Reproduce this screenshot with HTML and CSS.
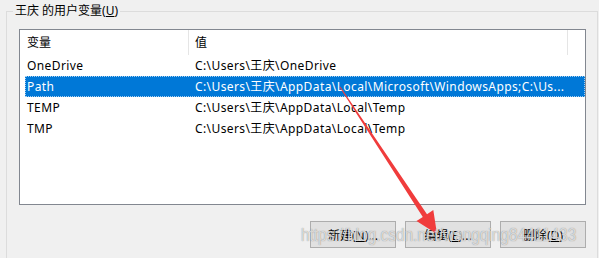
FILE: index.html
```html
<!DOCTYPE html>
<html lang="zh-CN">
<head>
    <meta charset="UTF-8">
    <meta name="viewport" content="width=device-width, initial-scale=1.0">
    <title>用户变量</title>
    <link rel="stylesheet" href="styles.css">
</head>
<body>
    <fieldset class="group">
        <legend class="group-title">王庆 的用户变量(<u>U</u>)</legend>
        <div class="list">
            <div class="list-header">
                <div class="col-head col-name">变量</div>
                <div class="col-head col-value">值</div>
            </div>
            <div class="row"><span>OneDrive</span><span>C:\Users\王庆\OneDrive</span></div>
            <div class="row selected"><span>Path</span><span>C:\Users\王庆\AppData\Local\Microsoft\WindowsApps;C:\Us...</span></div>
            <div class="row"><span>TEMP</span><span>C:\Users\王庆\AppData\Local\Temp</span></div>
            <div class="row"><span>TMP</span><span>C:\Users\王庆\AppData\Local\Temp</span></div>
        </div>
        <div class="buttons">
            <button type="button">新建(<u>N</u>)...</button>
            <button type="button">编辑(<u>E</u>)...</button>
            <button type="button">删除(<u>D</u>)</button>
        </div>
    </fieldset>

    <!-- red annotation arrow drawn over the dialog -->
    <svg class="arrow" width="599" height="258" viewBox="0 0 599 258">
        <polygon fill="#f03c3c" points="339.6,87.3 422.8,217 416.5,221.1 437,234 433.3,210.1 427,214.2 340.4,86.7"/>
    </svg>
    <div class="watermark">https://blog.csdn.net/wangqing84411433</div>
</body>
</html>
```

FILE: styles.css
```css
body {
    margin: 0;
    background-color: #f0f0f0;
    font-family: "Noto Sans", "Noto Sans CJK SC", sans-serif;
    font-size: 12px;
    color: #000;
    width: 599px;
    height: 258px;
    overflow: hidden;
    position: relative;
}
.group {
    margin: 3px 0 0 6px;
    width: 592px;
    box-sizing: border-box;
    height: 255px;
    border: 1px solid #dcdcdc;
    border-bottom: none;
    padding: 0 11px 0 12px;
    min-width: 0;
}
.group-title {
    margin-left: -6px;
    padding: 0 2px;
    line-height: 16px;
}
.list {
    margin-top: 10px;
    width: 567px;
    height: 176px;
    box-sizing: border-box;
    border: 1px solid #828790;
    background-color: #fff;
}
.list-header {
    display: flex;
    height: 25px;
}
.col-head {
    line-height: 25px;
    border-right: 1px solid #e5e5e5;
    box-sizing: border-box;
}
.col-name {
    width: 169px;
    padding-left: 7px;
}
.col-value {
    width: 379px;
    padding-left: 6px;
}
.row {
    display: grid;
    grid-template-columns: 168px 374px;
    margin-left: 5px;
    height: 21px;
    line-height: 21px;
    box-sizing: border-box;
    letter-spacing: 0.4px;
}
.row span {
    padding-left: 2px;
    white-space: nowrap;
    overflow: hidden;
}
.row.selected {
    background-color: #0078d7;
    color: #fff;
    outline: 1px dotted #a6cff0;
    outline-offset: -1px;
}
.buttons {
    display: flex;
    justify-content: flex-end;
    gap: 9px;
    width: 567px;
    margin-top: 16px;
}
button {
    width: 86px;
    height: 27px;
    background-color: #e1e1e1;
    border: 1px solid #adadad;
    border-radius: 0;
    font-family: inherit;
    font-size: 12px;
    color: #000;
    padding: 0;
}
.arrow {
    position: absolute;
    left: 0;
    top: 0;
}
.watermark {
    position: absolute;
    left: 301px;
    top: 225px;
    font-family: "Liberation Sans", sans-serif;
    font-size: 19px;
    line-height: 20px;
    color: rgba(255, 255, 255, 0.7);
    text-shadow: 0 0 1px rgba(90, 90, 90, 0.8);
    white-space: nowrap;
    transform: scaleX(0.81);
    transform-origin: left top;
}
```
